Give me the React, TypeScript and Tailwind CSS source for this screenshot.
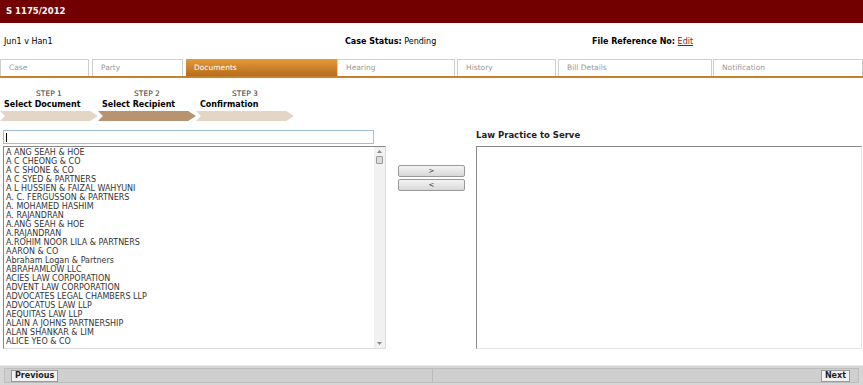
import React from "react";

const TABS = [
  { label: "Case", cls: "w-[89px]" },
  { label: "Party", cls: "w-[91px] ml-[3px]" },
  { label: "Documents", cls: "w-[151px] ml-[3px]", active: true },
  { label: "Hearing", cls: "w-[118px]" },
  { label: "History", cls: "w-[99px] ml-[2px]" },
  { label: "Bill Details", cls: "w-[154px] ml-[2px]" },
  { label: "Notification", cls: "w-[150px] ml-[1px]" },
];

const STEPS = [
  { n: "STEP 1", title: "Select Document" },
  { n: "STEP 2", title: "Select Recipient", active: true },
  { n: "STEP 3", title: "Confirmation" },
];

const FIRMS = [
  "A ANG SEAH & HOE",
  "A C CHEONG & CO",
  "A C SHONE & CO",
  "A C SYED & PARTNERS",
  "A L HUSSIEN & FAIZAL WAHYUNI",
  "A. C. FERGUSSON & PARTNERS",
  "A. MOHAMED HASHIM",
  "A. RAJANDRAN",
  "A.ANG SEAH & HOE",
  "A.RAJANDRAN",
  "A.ROHIM NOOR LILA & PARTNERS",
  "AARON & CO",
  "Abraham Logan & Partners",
  "ABRAHAMLOW LLC",
  "ACIES LAW CORPORATION",
  "ADVENT LAW CORPORATION",
  "ADVOCATES LEGAL CHAMBERS LLP",
  "ADVOCATUS LAW LLP",
  "AEQUITAS LAW LLP",
  "ALAIN A JOHNS PARTNERSHIP",
  "ALAN SHANKAR & LIM",
  "ALICE YEO & CO",
];

export default function App() {
  return (
    <div className="w-[863px] h-[385px] bg-white overflow-hidden flex flex-col font-['DejaVu_Sans',Verdana,sans-serif] text-[8px] text-[#222]">
      {/* header */}
      <div className="h-[23px] bg-[#730000] flex items-center px-[6px]">
        <span className="text-white font-bold text-[8.5px]">S 1175/2012</span>
      </div>

      {/* case info */}
      <div className="h-[36px] pt-[2px] flex items-center text-[8px] text-black">
        <div className="w-[345px] pl-[4px]">Jun1 v Han1</div>
        <div className="w-[247px]">
          <b>Case Status:</b> Pending
        </div>
        <div>
          <b>File Reference No:</b>{" "}
          <span className="text-[#8b1a1a] underline">Edit</span>
        </div>
      </div>

      {/* tabs */}
      <div className="flex border-b-2 border-[#c8802a] h-[19px]">
        {TABS.map((t) =>
          t.active ? (
            <div
              key={t.label}
              className={`${t.cls} shrink-0 bg-gradient-to-b from-[#e69a38] to-[#b56d1e] text-white px-[8px] flex items-center text-[7.5px]`}
            >
              {t.label}
            </div>
          ) : (
            <div
              key={t.label}
              className={`${t.cls} shrink-0 border border-b-0 border-[#cfcfcf] bg-white text-[#999] px-[8px] flex items-center text-[7.5px]`}
            >
              {t.label}
            </div>
          )
        )}
      </div>

      {/* steps */}
      <div className="flex mt-[11px] h-[35px]">
        {STEPS.map((s) => (
          <div key={s.n} className="w-[98px] flex flex-col">
            <div className="text-center text-[7.5px] text-[#333] leading-[10px]">{s.n}</div>
            <div className="pl-[4px] font-bold text-[8px] text-black leading-[11px]">{s.title}</div>
            <div
              className={`mt-[1px] h-[10px] w-[98px] ${
                s.active ? "bg-[#b89370]" : "bg-[#e3d6c4]"
              } [clip-path:polygon(0_0,92%_0,100%_50%,92%_100%,0_100%,5%_50%)]`}
            />
          </div>
        ))}
      </div>

      {/* main */}
      <div className="flex mt-[6px] h-[220px]">
        <div className="w-[398px] pl-[3px] flex flex-col">
          <div className="w-[371px] h-[14px] border border-[#9fbfdc] bg-white flex items-center pl-[2px]">
            <div className="w-px h-[9px] bg-black" />
          </div>
          <div className="mt-[2px] w-[383px] h-[203px] border border-[#888] border-r-[#ddd] border-b-[#ddd] flex">
            <div className="flex-1 pl-[2px] pt-[1px] overflow-hidden">
              {FIRMS.map((f) => (
                <div key={f} className="leading-[9px] text-[8px] text-[#333] whitespace-nowrap">
                  {f}
                </div>
              ))}
            </div>
            <div className="w-[11px] bg-[#f1f1f1] flex flex-col items-center justify-between py-[3px] text-[#888]">
              <div className="flex flex-col items-center gap-[3px]">
                <svg width="5" height="3" viewBox="0 0 5 3">
                  <path d="M0 3 L2.5 0 L5 3 Z" fill="#888" />
                </svg>
                <div className="w-[7px] h-[8px] border border-[#999] bg-[#ddd] rounded-[1px]" />
              </div>
              <svg width="5" height="3" viewBox="0 0 5 3">
                <path d="M0 0 L2.5 3 L5 0 Z" fill="#888" />
              </svg>
            </div>
          </div>
        </div>

        <div className="w-[78px] pt-[35px] flex flex-col gap-[2px]">
          {[">", "<"].map((b) => (
            <div
              key={b}
              className="w-[67px] h-[12px] border border-[#999] rounded-[2px] bg-gradient-to-b from-[#f4f4f4] to-[#d8d8d8] flex items-center justify-center text-[7px] text-[#333]"
            >
              {b}
            </div>
          ))}
        </div>

        <div className="flex-1 flex flex-col">
          <div className="h-[16px] font-bold text-[8.5px] text-[#222] leading-[10px]">Law Practice to Serve</div>
          <div className="w-[386px] h-[203px] border border-[#888] border-r-[#e5e5e5] border-b-[#e5e5e5] bg-white" />
        </div>
      </div>

      {/* footer */}
      <div className="mt-auto h-[20px] bg-[#d6d6d6] border-t border-[#e8e8e8] flex items-center px-[4px]">
        <div className="flex-1 h-[15px] border border-[#bdbdbd] bg-[#cfcfcf] flex items-center">
          <div className="w-[428px] h-full border-r border-[#bbb] flex items-center pl-[6px]">
            <div className="h-[12px] px-[3px] border border-[#999] bg-[#f2f2f2] font-bold text-[8px] text-[#222] flex items-center">
              Previous
            </div>
          </div>
          <div className="flex-1 h-full flex items-center justify-end pr-[8px]">
            <div className="h-[12px] px-[3px] border border-[#999] bg-[#f2f2f2] font-bold text-[8px] text-[#222] flex items-center">
              Next
            </div>
          </div>
        </div>
      </div>
    </div>
  );
}
